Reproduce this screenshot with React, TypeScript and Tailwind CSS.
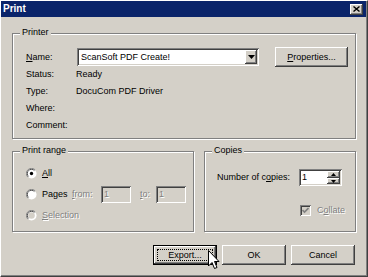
import React from "react";

const raised =
  "shadow-[inset_-1px_-1px_0_#404040,inset_1px_1px_0_#ffffff,inset_-2px_-2px_0_#808080,inset_2px_2px_0_#d4d0c8]";
const sunken =
  "shadow-[inset_1px_1px_0_#808080,inset_-1px_-1px_0_#ffffff,inset_2px_2px_0_#404040,inset_-2px_-2px_0_#d4d0c8]";
const disabled = "text-[#808080] [text-shadow:1px_1px_0_#ffffff]";

function Group({ title, className, children }: { title: string; className: string; children: React.ReactNode }) {
  return (
    <div className={`relative border border-[#808080] shadow-[inset_1px_1px_0_#ffffff,1px_1px_0_#ffffff] ${className}`}>
      <span className="absolute -top-[7px] left-[7px] bg-[#d4d0c8] px-[2px] leading-[11px]">{title}</span>
      {children}
    </div>
  );
}

function Radio({ checked, off }: { checked?: boolean; off?: boolean }) {
  return (
    <svg width="11" height="11" viewBox="0 0 12 12" className="shrink-0">
      <circle cx="6" cy="6" r="5.5" fill="#ffffff" />
      <path d="M10 2 A5.5 5.5 0 0 0 2 10" fill="none" stroke="#808080" strokeWidth="1" />
      <path d="M9.2 2.8 A4.5 4.5 0 0 0 2.8 9.2" fill="none" stroke="#404040" strokeWidth="1" />
      <circle cx="6" cy="6" r="3.6" fill={off ? "#d4d0c8" : "#ffffff"} />
      {checked && <circle cx="6" cy="6" r="1.8" fill="#000000" />}
    </svg>
  );
}

function Btn({ label, u, className = "" }: { label: string; u?: number; className?: string }) {
  return (
    <div className={`flex h-[20px] w-[64px] items-center justify-center bg-[#d4d0c8] ${raised} ${className}`}>
      {u === undefined ? label : (
        <span>
          {label.slice(0, u)}
          <span className="underline">{label[u]}</span>
          {label.slice(u + 1)}
        </span>
      )}
    </div>
  );
}

export default function App() {
  return (
    <div
      className="relative flex h-[277px] w-[368px] flex-col border-t border-l border-b border-r border-t-white border-l-white border-r-[#404040] border-b-[#404040] bg-[#d4d0c8] text-[9px] leading-none text-black shadow-[inset_-1px_-1px_0_#808080] select-none"
      style={{ fontFamily: '"Liberation Sans", Arial, sans-serif' }}
    >
      {/* title bar */}
      <div className="mr-[1px] flex h-[16px] items-center justify-between bg-[#0a246a] pl-[2px] pr-[3px]">
        <span className="text-[10px] font-bold text-white">Print</span>
        <div className={`flex h-[11px] w-[13px] items-center justify-center bg-[#d4d0c8] ${raised}`}>
          <svg width="7" height="6" viewBox="0 0 7 6">
            <path d="M0.5 0.5 L6.5 5.5 M6.5 0.5 L0.5 5.5" stroke="#000" strokeWidth="1.4" />
          </svg>
        </div>
      </div>

      <div className="flex flex-col px-[11px] pt-[16px]">
        <Group title="Printer" className="h-[106px] w-[344px]">
          <div className="flex flex-col pl-[13px] pt-[14px]">
            <div className="flex h-[18px] items-center">
              <span className="w-[51px]"><span className="underline">N</span>ame:</span>
              <div className={`flex h-[18px] w-[182px] items-center justify-between bg-white pl-[4px] pr-[2px] ${sunken}`}>
                <span>ScanSoft PDF Create!</span>
                <div className={`flex h-[14px] w-[12px] items-center justify-center bg-[#d4d0c8] ${raised}`}>
                  <svg width="7" height="4" viewBox="0 0 7 4"><path d="M0 0 H7 L3.5 4 Z" fill="#000" /></svg>
                </div>
              </div>
              <Btn label="Properties..." u={0} className="ml-[16px] h-[19px] w-[73px]" />
            </div>
            {[
              ["Status:", "Ready"],
              ["Type:", "DocuCom PDF Driver"],
              ["Where:", ""],
              ["Comment:", ""],
            ].map(([k, v]) => (
              <div key={k} className="flex h-[17px] items-center">
                <span className="w-[50px]">{k}</span>
                <span>{v}</span>
              </div>
            ))}
          </div>
        </Group>

        <div className="mt-[12px] flex gap-[10px]">
          <Group title="Print range" className="h-[81px] w-[182px]">
            <div className="flex flex-col pl-[13px] pt-[11px]">
              <div className="flex h-[21px] items-center gap-[5px]">
                <Radio checked />
                <span><span className="underline">A</span>ll</span>
              </div>
              <div className="flex h-[21px] items-center">
                <Radio />
                <span className="ml-[5px] w-[30px]">Pages</span>
                <span className={`w-[29px] ${disabled}`}><span className="underline">f</span>rom:</span>
                <div className={`flex h-[17px] w-[30px] items-center pl-[3px] ${sunken} ${disabled}`}>1</div>
                <span className={`ml-[9px] w-[16px] ${disabled}`}><span className="underline">t</span>o:</span>
                <div className={`flex h-[17px] w-[30px] items-center pl-[3px] ${sunken} ${disabled}`}>1</div>
              </div>
              <div className="flex h-[21px] items-center gap-[5px]">
                <Radio off />
                <span className={disabled}><span className="underline">S</span>election</span>
              </div>
            </div>
          </Group>

          <Group title="Copies" className="h-[81px] w-[152px]">
            <div className="flex flex-col pl-[12px] pt-[17px]">
              <div className="flex h-[17px] items-center">
                <span className="w-[82px]">Number of c<span className="underline">o</span>pies:</span>
                <div className={`flex h-[17px] w-[43px] items-center justify-between bg-white pl-[3px] pr-[2px] ${sunken}`}>
                  <span>1</span>
                  <div className="flex flex-col">
                    <div className={`flex h-[7px] w-[13px] items-center justify-center bg-[#d4d0c8] ${raised}`}>
                      <svg width="5" height="3" viewBox="0 0 5 3"><path d="M0 3 H5 L2.5 0 Z" fill="#000" /></svg>
                    </div>
                    <div className={`flex h-[6px] w-[13px] items-center justify-center bg-[#d4d0c8] ${raised}`}>
                      <svg width="5" height="3" viewBox="0 0 5 3"><path d="M0 0 H5 L2.5 3 Z" fill="#000" /></svg>
                    </div>
                  </div>
                </div>
              </div>
              <div className="ml-[83px] mt-[16px] flex h-[16px] items-center gap-[6px]">
                <div className={`flex h-[11px] w-[11px] items-center justify-center bg-[#d4d0c8] ${sunken}`}>
                  <svg width="7" height="7" viewBox="0 0 7 7">
                    <path d="M0.5 3 L2.5 5 L6.5 1" fill="none" stroke="#808080" strokeWidth="1.6" />
                  </svg>
                </div>
                <span className={disabled}>C<span className="underline">o</span>llate</span>
              </div>
            </div>
          </Group>
        </div>

        <div className="mt-[13px] flex justify-end gap-[5px] pr-[1px]">
          <div className="border border-black">
            <div className={`relative flex h-[18px] w-[62px] items-center justify-center bg-[#d4d0c8] ${raised}`}>
              <div className="absolute inset-[3px] border border-dotted border-black" />
              <span>Export...</span>
            </div>
          </div>
          <Btn label="OK" />
          <Btn label="Cancel" />
        </div>
      </div>

      {/* mouse cursor */}
      <svg className="absolute left-[207px] top-[249px]" width="12" height="20" viewBox="0 0 12 20">
        <path d="M0.5 0.5 V16 L4 12.5 L6.5 18.5 L9 17.5 L6.5 11.5 H11 Z" fill="#fff" stroke="#000" strokeWidth="1" />
      </svg>
    </div>
  );
}
